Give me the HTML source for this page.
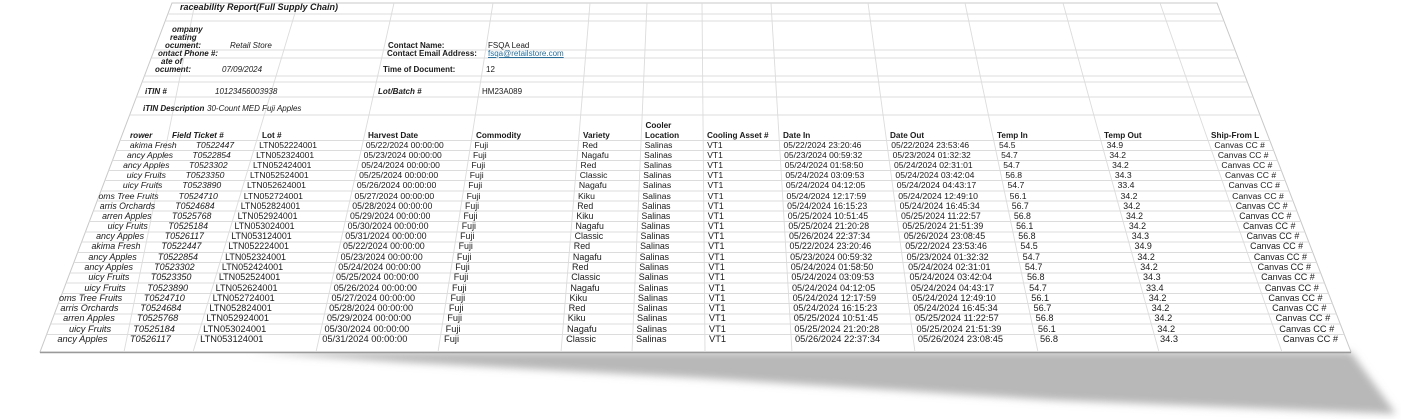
<!DOCTYPE html>
<html><head><meta charset="utf-8"><style>
html,body{margin:0;padding:0;background:#fff;width:1401px;height:419px;overflow:hidden;position:relative}
body{font-family:"Liberation Sans",sans-serif;color:#1a1a1a}
svg{position:absolute;left:0;top:0}
.r{position:absolute;left:0;top:calc(var(--y)*1px - 0.62em);font-size:calc((7.9 + var(--y)*0.0041)*1px);white-space:nowrap;width:1401px;height:12px}
.t{font-size:8px}
.h{font-size:8.2px}
.r span{position:absolute;top:0}
.b{font-weight:bold}.i{font-style:italic}
.g{left:calc((180 + (var(--y) - 136)*-0.356)*1px);transform:translateX(-100%);font-style:italic}
.ft{left:calc((196 + (var(--y) - 145)*-0.34)*1px);font-style:italic}
.lt{left:calc((262 + (var(--y) - 136)*-0.304)*1px)}
.hd{left:calc((368 + (var(--y) - 136)*-0.225)*1px)}
.cm{left:calc((476 + (var(--y) - 136)*-0.157)*1px)}
.va{left:calc((583 + (var(--y) - 136)*-0.083)*1px)}
.co{left:calc((645 + (var(--y) - 136)*-0.044)*1px)}
.vt{left:calc((707 + (var(--y) - 136)*0.01)*1px)}
.di{left:calc((783 + (var(--y) - 136)*0.059)*1px)}
.do{left:calc((890 + (var(--y) - 136)*0.137)*1px)}
.ti{left:calc((997 + (var(--y) - 136)*0.211)*1px)}
.to{left:calc((1104 + (var(--y) - 136)*0.275)*1px)}
.sf{left:calc((1211 + (var(--y) - 136)*0.353)*1px)}
a{color:#2a6f9a;text-decoration:underline}
</style></head><body>
<svg width="1401" height="419">
<defs>
<filter id="bl" x="-10%" y="-50%" width="120%" height="200%"><feGaussianBlur stdDeviation="4"/></filter>
<clipPath id="cp"><polygon points="172,3 1217,3 1351,352 40,352"/></clipPath>
</defs>
<polygon points="250,352 1351,352 1396,414 1050,400 700,378 400,362" fill="#b8b8b8" filter="url(#bl)"/>
<polygon points="172,3 1217,3 1351,352 40,352" fill="#fff" stroke="#c8c8c8" stroke-width="1"/>
<line x1="40" y1="352.5" x2="1351" y2="352.5" stroke="#9a9a9a" stroke-width="1.5"/>
<g clip-path="url(#cp)" stroke="#dcdcdc" stroke-width="0.9">
<line x1="0" y1="14" x2="1401" y2="14"/><line x1="0" y1="21" x2="1401" y2="21"/>
<line x1="0" y1="50" x2="1401" y2="50"/><line x1="0" y1="58" x2="1401" y2="58"/>
<line x1="0" y1="76" x2="1401" y2="76"/><line x1="0" y1="82" x2="1401" y2="82"/>
<line x1="0" y1="97" x2="1401" y2="97"/><line x1="0" y1="115" x2="1401" y2="115"/>
<line x1="0" y1="140.5" x2="1401" y2="140.5"/><line x1="0" y1="150.5" x2="1401" y2="150.5"/>
<line x1="0" y1="160.5" x2="1401" y2="160.5"/><line x1="0" y1="170.5" x2="1401" y2="170.5"/>
<line x1="0" y1="180.5" x2="1401" y2="180.5"/><line x1="0" y1="191" x2="1401" y2="191"/>
<line x1="0" y1="201" x2="1401" y2="201"/><line x1="0" y1="211" x2="1401" y2="211"/>
<line x1="0" y1="221.5" x2="1401" y2="221.5"/><line x1="0" y1="232" x2="1401" y2="232"/>
<line x1="0" y1="242" x2="1401" y2="242"/><line x1="0" y1="252.5" x2="1401" y2="252.5"/>
<line x1="0" y1="262.5" x2="1401" y2="262.5"/><line x1="0" y1="273" x2="1401" y2="273"/>
<line x1="0" y1="283" x2="1401" y2="283"/><line x1="0" y1="293.5" x2="1401" y2="293.5"/>
<line x1="0" y1="303.5" x2="1401" y2="303.5"/><line x1="0" y1="314" x2="1401" y2="314"/>
<line x1="0" y1="324" x2="1401" y2="324"/><line x1="0" y1="334.5" x2="1401" y2="334.5"/>
<line x1="195" y1="3" x2="124" y2="352"/><line x1="298" y1="3" x2="193" y2="352"/>
<line x1="394" y1="3" x2="316" y2="352"/><line x1="493" y1="3" x2="438" y2="352"/>
<line x1="590" y1="3" x2="561" y2="352"/><line x1="647" y1="3" x2="632" y2="352"/>
<line x1="702" y1="3" x2="705" y2="352"/><line x1="771" y1="3" x2="792" y2="352"/>
<line x1="868" y1="3" x2="915" y2="352"/><line x1="965" y1="3" x2="1038" y2="352"/>
<line x1="1063" y1="3" x2="1159" y2="352"/><line x1="1160" y1="3" x2="1282" y2="352"/>
</g>
</svg>

<div class="r b i" style="--y:8;font-size:9px"><span style="left:180px">raceability Report(Full Supply Chain)</span></div>
<div class="r t b i" style="--y:30"><span style="left:172px">ompany</span></div>
<div class="r t b i" style="--y:38"><span style="left:170px">reating</span></div>
<div class="r t" style="--y:46"><span class="b i" style="left:165px">ocument:</span><span class="i" style="left:230px">Retail Store</span><span class="b" style="left:388px">Contact Name:</span><span style="left:488px">FSQA Lead</span></div>
<div class="r t" style="--y:54"><span class="b i" style="left:158px">ontact Phone #:</span><span class="b" style="left:387px">Contact Email Address:</span><span style="left:488px"><a>fsqa@retailstore.com</a></span></div>
<div class="r t b i" style="--y:62"><span style="left:161px">ate of</span></div>
<div class="r t" style="--y:70"><span class="b i" style="left:155px">ocument:</span><span class="i" style="left:222px">07/09/2024</span><span class="b" style="left:383px">Time of Document:</span><span style="left:486px">12</span></div>
<div class="r t" style="--y:92"><span class="b i" style="left:145px">iTIN #</span><span class="i" style="left:215px">10123456003938</span><span class="b i" style="left:378px">Lot/Batch #</span><span style="left:482px">HM23A089</span></div>
<div class="r t" style="--y:109"><span class="b i" style="left:143px">iTIN Description</span><span class="i" style="left:207px">30-Count MED Fuji Apples</span></div>
<div class="r h b" style="--y:126"><span class="co">Cooler</span></div>
<div class="r h b" style="--y:136"><span class="i" style="left:130px">rower</span><span class="i" style="left:172px">Field Ticket #</span><span class="lt">Lot #</span><span class="hd">Harvest Date</span><span class="cm">Commodity</span><span class="va">Variety</span><span class="co">Location</span><span class="vt">Cooling Asset #</span><span class="di">Date In</span><span class="do">Date Out</span><span class="ti">Temp In</span><span class="to">Temp Out</span><span class="sf">Ship-From L</span></div>

<div class="r" style="--y:145.5"><span class="g">akima Fresh</span><span class="ft">T0522447</span><span class="lt">LTN052224001</span><span class="hd">05/22/2024 00:00:00</span><span class="cm">Fuji</span><span class="va">Red</span><span class="co">Salinas</span><span class="vt">VT1</span><span class="di">05/22/2024 23:20:46</span><span class="do">05/22/2024 23:53:46</span><span class="ti">54.5</span><span class="to">34.9</span><span class="sf">Canvas CC #</span></div>
<div class="r" style="--y:155.5"><span class="g">ancy Apples</span><span class="ft">T0522854</span><span class="lt">LTN052324001</span><span class="hd">05/23/2024 00:00:00</span><span class="cm">Fuji</span><span class="va">Nagafu</span><span class="co">Salinas</span><span class="vt">VT1</span><span class="di">05/23/2024 00:59:32</span><span class="do">05/23/2024 01:32:32</span><span class="ti">54.7</span><span class="to">34.2</span><span class="sf">Canvas CC #</span></div>
<div class="r" style="--y:165.5"><span class="g">ancy Apples</span><span class="ft">T0523302</span><span class="lt">LTN052424001</span><span class="hd">05/24/2024 00:00:00</span><span class="cm">Fuji</span><span class="va">Red</span><span class="co">Salinas</span><span class="vt">VT1</span><span class="di">05/24/2024 01:58:50</span><span class="do">05/24/2024 02:31:01</span><span class="ti">54.7</span><span class="to">34.2</span><span class="sf">Canvas CC #</span></div>
<div class="r" style="--y:175.5"><span class="g">uicy Fruits</span><span class="ft">T0523350</span><span class="lt">LTN052524001</span><span class="hd">05/25/2024 00:00:00</span><span class="cm">Fuji</span><span class="va">Classic</span><span class="co">Salinas</span><span class="vt">VT1</span><span class="di">05/24/2024 03:09:53</span><span class="do">05/24/2024 03:42:04</span><span class="ti">56.8</span><span class="to">34.3</span><span class="sf">Canvas CC #</span></div>
<div class="r" style="--y:185.5"><span class="g">uicy Fruits</span><span class="ft">T0523890</span><span class="lt">LTN052624001</span><span class="hd">05/26/2024 00:00:00</span><span class="cm">Fuji</span><span class="va">Nagafu</span><span class="co">Salinas</span><span class="vt">VT1</span><span class="di">05/24/2024 04:12:05</span><span class="do">05/24/2024 04:43:17</span><span class="ti">54.7</span><span class="to">33.4</span><span class="sf">Canvas CC #</span></div>
<div class="r" style="--y:196"><span class="g">oms Tree Fruits</span><span class="ft">T0524710</span><span class="lt">LTN052724001</span><span class="hd">05/27/2024 00:00:00</span><span class="cm">Fuji</span><span class="va">Kiku</span><span class="co">Salinas</span><span class="vt">VT1</span><span class="di">05/24/2024 12:17:59</span><span class="do">05/24/2024 12:49:10</span><span class="ti">56.1</span><span class="to">34.2</span><span class="sf">Canvas CC #</span></div>
<div class="r" style="--y:206"><span class="g">arris Orchards</span><span class="ft">T0524684</span><span class="lt">LTN052824001</span><span class="hd">05/28/2024 00:00:00</span><span class="cm">Fuji</span><span class="va">Red</span><span class="co">Salinas</span><span class="vt">VT1</span><span class="di">05/24/2024 16:15:23</span><span class="do">05/24/2024 16:45:34</span><span class="ti">56.7</span><span class="to">34.2</span><span class="sf">Canvas CC #</span></div>
<div class="r" style="--y:216"><span class="g">arren Apples</span><span class="ft">T0525768</span><span class="lt">LTN052924001</span><span class="hd">05/29/2024 00:00:00</span><span class="cm">Fuji</span><span class="va">Kiku</span><span class="co">Salinas</span><span class="vt">VT1</span><span class="di">05/25/2024 10:51:45</span><span class="do">05/25/2024 11:22:57</span><span class="ti">56.8</span><span class="to">34.2</span><span class="sf">Canvas CC #</span></div>
<div class="r" style="--y:226.5"><span class="g">uicy Fruits</span><span class="ft">T0525184</span><span class="lt">LTN053024001</span><span class="hd">05/30/2024 00:00:00</span><span class="cm">Fuji</span><span class="va">Nagafu</span><span class="co">Salinas</span><span class="vt">VT1</span><span class="di">05/25/2024 21:20:28</span><span class="do">05/25/2024 21:51:39</span><span class="ti">56.1</span><span class="to">34.2</span><span class="sf">Canvas CC #</span></div>
<div class="r" style="--y:237"><span class="g">ancy Apples</span><span class="ft">T0526117</span><span class="lt">LTN053124001</span><span class="hd">05/31/2024 00:00:00</span><span class="cm">Fuji</span><span class="va">Classic</span><span class="co">Salinas</span><span class="vt">VT1</span><span class="di">05/26/2024 22:37:34</span><span class="do">05/26/2024 23:08:45</span><span class="ti">56.8</span><span class="to">34.3</span><span class="sf">Canvas CC #</span></div>
<div class="r" style="--y:247"><span class="g">akima Fresh</span><span class="ft">T0522447</span><span class="lt">LTN052224001</span><span class="hd">05/22/2024 00:00:00</span><span class="cm">Fuji</span><span class="va">Red</span><span class="co">Salinas</span><span class="vt">VT1</span><span class="di">05/22/2024 23:20:46</span><span class="do">05/22/2024 23:53:46</span><span class="ti">54.5</span><span class="to">34.9</span><span class="sf">Canvas CC #</span></div>
<div class="r" style="--y:257.5"><span class="g">ancy Apples</span><span class="ft">T0522854</span><span class="lt">LTN052324001</span><span class="hd">05/23/2024 00:00:00</span><span class="cm">Fuji</span><span class="va">Nagafu</span><span class="co">Salinas</span><span class="vt">VT1</span><span class="di">05/23/2024 00:59:32</span><span class="do">05/23/2024 01:32:32</span><span class="ti">54.7</span><span class="to">34.2</span><span class="sf">Canvas CC #</span></div>
<div class="r" style="--y:268"><span class="g">ancy Apples</span><span class="ft">T0523302</span><span class="lt">LTN052424001</span><span class="hd">05/24/2024 00:00:00</span><span class="cm">Fuji</span><span class="va">Red</span><span class="co">Salinas</span><span class="vt">VT1</span><span class="di">05/24/2024 01:58:50</span><span class="do">05/24/2024 02:31:01</span><span class="ti">54.7</span><span class="to">34.2</span><span class="sf">Canvas CC #</span></div>
<div class="r" style="--y:278"><span class="g">uicy Fruits</span><span class="ft">T0523350</span><span class="lt">LTN052524001</span><span class="hd">05/25/2024 00:00:00</span><span class="cm">Fuji</span><span class="va">Classic</span><span class="co">Salinas</span><span class="vt">VT1</span><span class="di">05/24/2024 03:09:53</span><span class="do">05/24/2024 03:42:04</span><span class="ti">56.8</span><span class="to">34.3</span><span class="sf">Canvas CC #</span></div>
<div class="r" style="--y:288.5"><span class="g">uicy Fruits</span><span class="ft">T0523890</span><span class="lt">LTN052624001</span><span class="hd">05/26/2024 00:00:00</span><span class="cm">Fuji</span><span class="va">Nagafu</span><span class="co">Salinas</span><span class="vt">VT1</span><span class="di">05/24/2024 04:12:05</span><span class="do">05/24/2024 04:43:17</span><span class="ti">54.7</span><span class="to">33.4</span><span class="sf">Canvas CC #</span></div>
<div class="r" style="--y:298.5"><span class="g">oms Tree Fruits</span><span class="ft">T0524710</span><span class="lt">LTN052724001</span><span class="hd">05/27/2024 00:00:00</span><span class="cm">Fuji</span><span class="va">Kiku</span><span class="co">Salinas</span><span class="vt">VT1</span><span class="di">05/24/2024 12:17:59</span><span class="do">05/24/2024 12:49:10</span><span class="ti">56.1</span><span class="to">34.2</span><span class="sf">Canvas CC #</span></div>
<div class="r" style="--y:309"><span class="g">arris Orchards</span><span class="ft">T0524684</span><span class="lt">LTN052824001</span><span class="hd">05/28/2024 00:00:00</span><span class="cm">Fuji</span><span class="va">Red</span><span class="co">Salinas</span><span class="vt">VT1</span><span class="di">05/24/2024 16:15:23</span><span class="do">05/24/2024 16:45:34</span><span class="ti">56.7</span><span class="to">34.2</span><span class="sf">Canvas CC #</span></div>
<div class="r" style="--y:319"><span class="g">arren Apples</span><span class="ft">T0525768</span><span class="lt">LTN052924001</span><span class="hd">05/29/2024 00:00:00</span><span class="cm">Fuji</span><span class="va">Kiku</span><span class="co">Salinas</span><span class="vt">VT1</span><span class="di">05/25/2024 10:51:45</span><span class="do">05/25/2024 11:22:57</span><span class="ti">56.8</span><span class="to">34.2</span><span class="sf">Canvas CC #</span></div>
<div class="r" style="--y:329.5"><span class="g">uicy Fruits</span><span class="ft">T0525184</span><span class="lt">LTN053024001</span><span class="hd">05/30/2024 00:00:00</span><span class="cm">Fuji</span><span class="va">Nagafu</span><span class="co">Salinas</span><span class="vt">VT1</span><span class="di">05/25/2024 21:20:28</span><span class="do">05/25/2024 21:51:39</span><span class="ti">56.1</span><span class="to">34.2</span><span class="sf">Canvas CC #</span></div>
<div class="r" style="--y:339.5"><span class="g">ancy Apples</span><span class="ft">T0526117</span><span class="lt">LTN053124001</span><span class="hd">05/31/2024 00:00:00</span><span class="cm">Fuji</span><span class="va">Classic</span><span class="co">Salinas</span><span class="vt">VT1</span><span class="di">05/26/2024 22:37:34</span><span class="do">05/26/2024 23:08:45</span><span class="ti">56.8</span><span class="to">34.3</span><span class="sf">Canvas CC #</span></div>
</body></html>
